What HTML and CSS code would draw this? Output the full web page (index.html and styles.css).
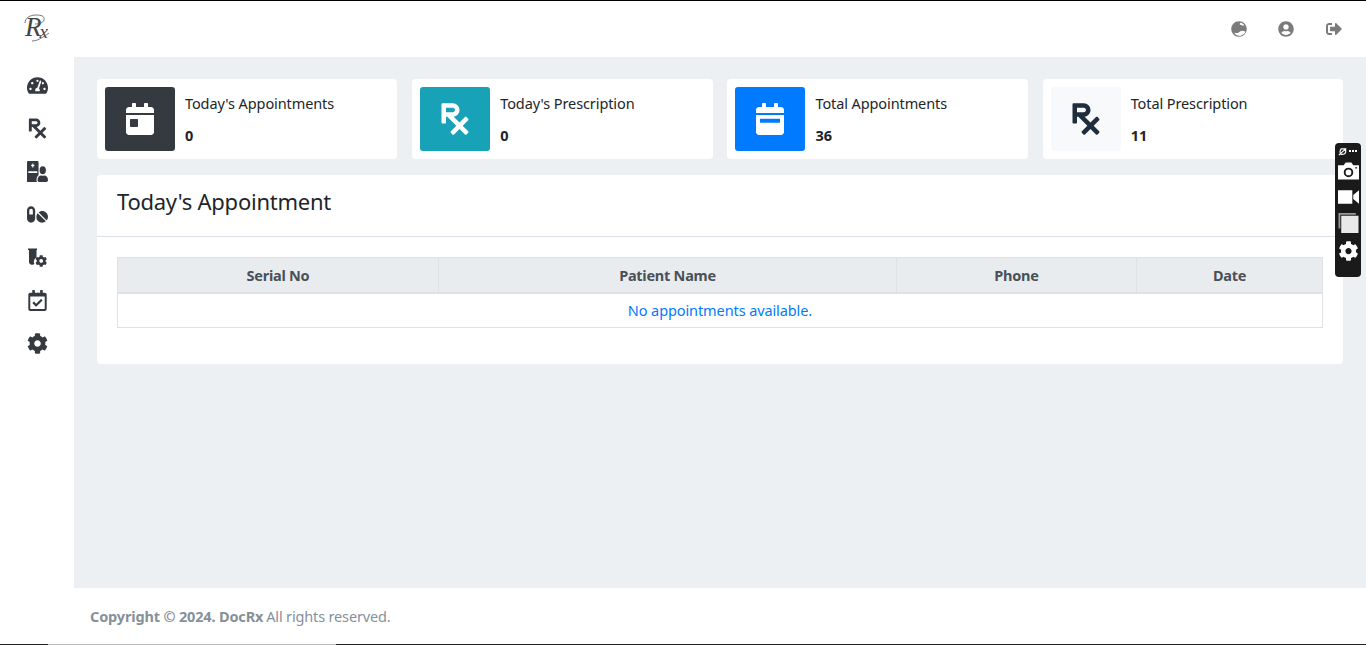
FILE: index.html
```html
<!DOCTYPE html>
<html lang="en">
<head>
<meta charset="utf-8">
<title>DocRx</title>
<link rel="stylesheet" href="styles.css">
</head>
<body>
<svg class="sprite" width="0" height="0">
  <symbol id="i-rx" viewBox="0 0 384 512"><path d="M301.26 352l78.06-78.06c6.25-6.25 6.25-16.38 0-22.63l-22.63-22.63c-6.25-6.25-16.38-6.25-22.63 0L256 306.74l-83.96-83.96C219.31 216.8 256 176.89 256 128c0-53.02-42.98-96-96-96H16C7.16 32 0 39.16 0 48v256c0 8.84 7.16 16 16 16h32c8.84 0 16-7.16 16-16v-80h18.75l128 128-78.06 78.06c-6.25 6.25-6.25 16.38 0 22.63l22.63 22.63c6.25 6.25 16.38 6.25 22.63 0L256 397.25l78.06 78.06c6.25 6.25 16.38 6.25 22.63 0l22.63-22.63c6.25-6.25 6.25-16.38 0-22.63L301.26 352zM64 96h96c17.64 0 32 14.36 32 32s-14.36 32-32 32H64V96z"/></symbol>
  <symbol id="i-cog" viewBox="0 0 512 512"><path d="M487.4 315.7l-42.6-24.6c4.3-23.2 4.3-47 0-70.2l42.6-24.6c4.9-2.8 7.1-8.6 5.5-14-11.1-35.6-30-67.8-54.7-94.6-3.8-4.1-10-5.1-14.8-2.3L380.8 110c-17.9-15.4-38.5-27.3-60.8-35.1V25.8c0-5.6-3.9-10.5-9.4-11.7-36.7-8.2-74.3-7.8-109.2 0-5.5 1.2-9.4 6.1-9.4 11.7V75c-22.2 7.9-42.8 19.8-60.8 35.1L88.7 85.5c-4.9-2.8-11-1.9-14.8 2.3-24.7 26.7-43.6 58.9-54.7 94.6-1.7 5.4.6 11.2 5.5 14L67.3 221c-4.3 23.2-4.3 47 0 70.2l-42.6 24.6c-4.9 2.8-7.1 8.6-5.5 14 11.1 35.6 30 67.8 54.7 94.6 3.8 4.1 10 5.1 14.8 2.3l42.6-24.6c17.9 15.4 38.5 27.3 60.8 35.1v49.2c0 5.6 3.9 10.5 9.4 11.7 36.7 8.2 74.3 7.8 109.2 0 5.5-1.2 9.4-6.1 9.4-11.7v-49.2c22.2-7.9 42.8-19.8 60.8-35.1l42.6 24.6c4.9 2.8 11 1.9 14.8-2.3 24.7-26.7 43.6-58.9 54.7-94.6 1.5-5.5-.7-11.3-5.6-14.1zM256 336c-44.1 0-80-35.9-80-80s35.9-80 80-80 80 35.9 80 80-35.9 80-80 80z"/></symbol>
</svg>

<div class="app">
  <header class="topbar">
    <svg class="logo" viewBox="0 0 27 28">
      <text class="logo-text" x="1" y="22"><tspan class="logo-r">R</tspan><tspan class="logo-x" dx="-2" dy="2">x</tspan></text>
      <path class="logo-swash" d="M1 9C1 4 6 1 12 1c5 0 9 1 8 5-1 3-5 4-9 4M8 27c5 0 10-3 17-8"/>
    </svg>
    <nav class="top-actions">
      <svg class="top-icon" viewBox="0 0 496 512"><path fill-rule="evenodd" d="M248 8C111 8 0 119 0 256s111 248 248 248 248-111 248-248S385 8 248 8zM90 370c50 20 110 30 160-10 30-25 50-50 100-50 40 0 70 10 105 30l-25 50c-30 30-70 60-110 70-50 15-110 10-150-10-30-15-60-50-80-80zM300 55c40 10 80 30 110 70l-30 35-50-30-50-10-10-30z"/></svg>
      <svg class="top-icon" viewBox="0 0 496 512"><path d="M248 8C111 8 0 119 0 256s111 248 248 248 248-111 248-248S385 8 248 8zm0 96c48.6 0 88 39.4 88 88s-39.4 88-88 88-88-39.4-88-88 39.4-88 88-88zm0 344c-58.7 0-111.3-26.6-146.5-68.2 18.8-35.4 55.6-59.8 98.5-59.8 2.4 0 4.8.4 7.1 1.1 13 4.2 26.6 6.9 40.9 6.9 14.3 0 28-2.7 40.9-6.9 2.3-.7 4.7-1.1 7.1-1.1 42.9 0 79.7 24.4 98.5 59.8C359.3 421.4 306.7 448 248 448z"/></svg>
      <svg class="top-icon top-last" viewBox="0 0 512 512"><path d="M497 273L329 441c-15 15-41 4.5-41-17v-96H152c-13.3 0-24-10.7-24-24v-96c0-13.3 10.7-24 24-24h136V88c0-21.4 25.9-32 41-17l168 168c9.3 9.4 9.3 24.6 0 34zM192 436v-40c0-6.6-5.4-12-12-12H96c-17.7 0-32-14.3-32-32V160c0-17.7 14.3-32 32-32h84c6.6 0 12-5.4 12-12V76c0-6.6-5.4-12-12-12H96c-53 0-96 43-96 96v192c0 53 43 96 96 96h84c6.6 0 12-5.4 12-12z"/></svg>
    </nav>
  </header>

  <div class="middle">
    <aside class="sidebar">
      <svg class="nav-icon" viewBox="0 0 576 512"><path d="M288 32C128.94 32 0 160.94 0 320c0 52.8 14.25 102.26 39.06 144.8 5.61 9.62 16.3 15.2 27.44 15.2h443c11.14 0 21.83-5.58 27.44-15.2C561.75 422.26 576 372.8 576 320c0-159.06-128.94-288-288-288zm0 64c14.71 0 26.58 10.13 30.32 23.65-1.11 2.26-2.64 4.23-3.45 6.67l-9.22 27.67c-5.13 3.49-10.97 6.01-17.64 6.01-17.67 0-32-14.33-32-32S270.33 96 288 96zM96 384c-17.67 0-32-14.33-32-32s14.33-32 32-32 32 14.33 32 32-14.33 32-32 32zm48-160c-17.67 0-32-14.33-32-32s14.33-32 32-32 32 14.33 32 32-14.33 32-32 32zm246.77-72.41l-61.33 184C343.13 347.33 352 364.54 352 384c0 11.72-3.38 22.55-8.88 32H232.88c-5.5-9.45-8.88-20.28-8.88-32 0-33.94 26.5-61.43 59.9-63.59l61.34-184.01c4.17-12.56 17.73-19.45 30.36-15.17 12.57 4.19 19.35 17.79 15.17 30.36zm14.66 57.2l15.52-46.55c3.47-1.29 7.13-2.23 11.05-2.23 17.67 0 32 14.33 32 32s-14.33 32-32 32c-11.38-.01-20.89-6.28-26.57-15.22zM480 384c-17.67 0-32-14.33-32-32s14.33-32 32-32 32 14.33 32 32-14.33 32-32 32z"/></svg>
      <svg class="nav-icon nav-rx"><use href="#i-rx"/></svg>
      <svg class="nav-icon" viewBox="0 0 640 512" preserveAspectRatio="none"><path fill-rule="evenodd" d="M480 320a96 96 0 1 0-96-96 96 96 0 0 0 96 96zm48 32a22.88 22.88 0 0 0-7.06 1.09 124.76 124.76 0 0 1-81.89 0A22.88 22.88 0 0 0 432 352a112 112 0 0 0-112 112.62c.14 26.26 21.73 47.38 48 47.38h224c26.27 0 47.86-21.12 48-47.38A112 112 0 0 0 528 352zm-198.09 10.45A145.19 145.19 0 0 1 352 344.62V32a32 32 0 0 0-32-32H32A32 32 0 0 0 0 32v464a16 16 0 0 0 16 16h288.31A78.62 78.62 0 0 1 288 464.79a143.06 143.06 0 0 1 41.91-102.34zM40 250h272v40H40zM192 154a6 6 0 0 1-6 6h-20a6 6 0 0 1-6-6v-26h-26a6 6 0 0 1-6-6V98a6 6 0 0 1 6-6h26V66a6 6 0 0 1 6-6h20a6 6 0 0 1 6 6v26h26a6 6 0 0 1 6 6v24a6 6 0 0 1-6 6h-26z"/></svg>
      <svg class="nav-icon" viewBox="0 0 576 512"><path d="M112 32C50.1 32 0 82.1 0 144v224c0 61.9 50.1 112 112 112s112-50.1 112-112V144c0-61.9-50.1-112-112-112zm48 224H64V144c0-26.5 21.5-48 48-48s48 21.5 48 48v112zm139.7-29.7c-3.5-3.5-9.4-3.1-12.3.8-45.3 62.5-40.4 150.1 15.9 206.4 56.3 56.3 143.9 61.2 206.4 15.9 4-2.9 4.3-8.8.8-12.3L299.7 226.3zm229.8-19c-56.3-56.3-143.9-61.2-206.4-15.9-4 2.9-4.3 8.8-.8 12.3l210.8 210.8c3.5 3.500 9.4 3.100 12.3-.8 45.3-62.6 40.5-150.1-15.9-206.4z"/></svg>
      <svg class="nav-icon" viewBox="0 0 21 21"><path d="M1 1.500h9v1.500H9.500v7.500a5 5 0 0 0-2 6.500A3.500 3.500 0 0 1 2 15.500V3H1z"/><g transform="translate(8.200 8) scale(.0234)"><use href="#i-cog" width="512" height="512"/></g></svg>
      <svg class="nav-icon" viewBox="0 0 448 512"><path d="M400 64h-48V12c0-6.6-5.4-12-12-12h-40c-6.600 0-12 5.400-12 12v52H160V12c0-6.600-5.400-12-12-12h-40c-6.600 0-12 5.400-12 12v52H48C21.500 64 0 85.500 0 112v352c0 26.500 21.500 48 48 48h352c26.500 0 48-21.500 48-48V112c0-26.500-21.500-48-48-48zm-6 400H54a6 6 0 0 1-6-6V160h352v298a6 6 0 0 1-6 6zm-52.849-200.650L198.842 404.519c-4.705 4.667-12.303 4.637-16.971-.068l-75.091-75.699c-4.667-4.705-4.637-12.303.068-16.971l22.719-22.536c4.705-4.667 12.303-4.637 16.970.069l44.104 44.461 111.072-110.181c4.705-4.667 12.303-4.637 16.971.068l22.536 22.718c4.667 4.705 4.636 12.303-.069 16.970z"/></svg>
      <svg class="nav-icon"><use href="#i-cog"/></svg>
    </aside>

    <main class="content">
      <section class="stats">
        <div class="stat">
          <div class="stat-box box-dark"><svg class="stat-svg" viewBox="0 0 448 512"><path d="M0 464c0 26.500 21.500 48 48 48h352c26.500 0 48-21.500 48-48V192H0v272zm64-192c0-8.800 7.200-16 16-16h96c8.800 0 16 7.200 16 16v96c0 8.800-7.200 16-16 16H80c-8.800 0-16-7.200-16-16v-96zM400 64h-48V16c0-8.800-7.200-16-16-16h-32c-8.800 0-16 7.200-16 16v48H160V16c0-8.800-7.200-16-16-16h-32c-8.800 0-16 7.200-16 16v48H48C21.500 64 0 85.500 0 112v48h448v-48c0-26.500-21.500-48-48-48z"/></svg></div>
          <div class="stat-text"><span class="stat-label">Today's Appointments</span><span class="stat-value">0</span></div>
        </div>
        <div class="stat">
          <div class="stat-box box-teal"><svg class="stat-svg stat-rx"><use href="#i-rx"/></svg></div>
          <div class="stat-text"><span class="stat-label">Today's Prescription</span><span class="stat-value">0</span></div>
        </div>
        <div class="stat">
          <div class="stat-box box-blue"><svg class="stat-svg" viewBox="0 0 448 512"><path fill-rule="evenodd" d="M0 464c0 26.500 21.500 48 48 48h352c26.500 0 48-21.500 48-48V192H0v272zM64 250h320v64H64zM400 64h-48V16c0-8.800-7.200-16-16-16h-32c-8.800 0-16 7.200-16 16v48H160V16c0-8.800-7.200-16-16-16h-32c-8.800 0-16 7.200-16 16v48H48C21.500 64 0 85.500 0 112v48h448v-48c0-26.500-21.500-48-48-48z"/></svg></div>
          <div class="stat-text"><span class="stat-label">Total Appointments</span><span class="stat-value">36</span></div>
        </div>
        <div class="stat">
          <div class="stat-box box-light"><svg class="stat-svg stat-rx"><use href="#i-rx"/></svg></div>
          <div class="stat-text"><span class="stat-label">Total Prescription</span><span class="stat-value">11</span></div>
        </div>
      </section>

      <section class="card">
        <div class="card-head"><h1 class="card-title">Today's Appointment</h1></div>
        <div class="card-body">
          <table class="table">
            <colgroup><col class="c1"><col class="c2"><col class="c3"><col class="c4"></colgroup>
            <thead><tr><th>Serial No</th><th>Patient Name</th><th>Phone</th><th>Date</th></tr></thead>
            <tbody><tr><td colspan="4" class="empty">No appointments available.</td></tr></tbody>
          </table>
        </div>
      </section>
    </main>
  </div>

  <footer class="footer"><strong>Copyright © 2024. DocRx</strong> All rights reserved.</footer>
</div>

<div class="dock">
  <div class="dock-top">
    <svg class="dock-link" viewBox="0 0 10 10"><path d="M1 9 9 1.500M3.500 2h5v3.500C8.500 7.500 6 8.500 3 8 2 6 2 4 3.500 2z" fill="none" stroke="#fff" stroke-width="1.300"/></svg>
    <span class="dock-dots"><i></i><i></i><i></i></span>
  </div>
  <svg class="dock-icon" viewBox="0 0 22 18"><path fill-rule="evenodd" d="M0 3h6l2-3h6l2 3h6v15H0zM11 5.500a5 5 0 1 0 0 10 5 5 0 0 0 0-10zM11 7.500a3 3 0 1 1 0 6 3 3 0 0 1 0-6zM18 5h2v1.500h-2z"/></svg>
  <svg class="dock-icon" viewBox="0 0 22 18"><path d="M0 2h15v14H0zM16 7l6-5v14l-6-5z"/></svg>
  <svg class="dock-icon" viewBox="0 0 22 22"><path class="dock-back" d="M0 0h19v2H2v15H0z"/><path class="dock-front" d="M3 3h19v19H3z"/></svg>
  <svg class="dock-icon dock-cog"><use href="#i-cog"/></svg>
</div>

<div class="edge-bottom"><span class="seg-grey"></span></div>
</body>
</html>
```

FILE: styles.css
```css
* { box-sizing: border-box; }
html, body { margin: 0; height: 100%; }
body {
  font-family: "Noto Sans", "Open Sans", sans-serif;
  font-size: 14.5px;
  color: #212529;
  background: #fff;
  overflow: hidden;
  position: relative;
}
.sprite { position: absolute; }
.app { display: flex; flex-direction: column; height: 645px; border-top: 1px solid #000; }
.topbar { display: flex; align-items: center; justify-content: space-between; height: 56px; flex: none; padding: 0 24px; }
.logo { width: 27px; height: 28px; margin-top: -3px; overflow: visible; }
.logo-text { font-family: "Liberation Serif", serif; font-style: italic; fill: #444; }
.logo-r { font-size: 27px; }
.logo-x { font-size: 19px; }
.logo-swash { fill: none; stroke: #555; stroke-width: .8; }
.top-actions { display: flex; gap: 31px; align-items: center; }
.top-icon { width: 16px; height: 16px; fill: #7b7b7b; }
.top-icon:first-child { margin-left: -1px; }
.top-last { margin-left: 1px; }
.middle { flex: 1; display: flex; min-height: 0; }
.sidebar { width: 74px; flex: none; display: flex; flex-direction: column; align-items: center; padding-top: 18px; gap: 22px; }
.nav-icon { width: 21px; height: 21px; fill: #343a40; flex: none; }
.nav-rx { width: 23px; height: 23px; margin: -1px 0; }
.content { flex: 1; background: #ecf0f3; padding: 22px 23px; display: flex; flex-direction: column; gap: 16px; }
.stats { display: grid; grid-template-columns: repeat(4, 1fr); gap: 14.9px; }
.stat { background: #fff; border-radius: 4px; height: 80px; padding: 8px; display: flex; gap: 10px; }
.stat-box { width: 70px; height: 64px; border-radius: 3px; display: flex; align-items: center; justify-content: center; flex: none; }
.stat-svg { width: 30px; height: 32px; fill: currentColor; }
.stat-rx { width: 36px; height: 36px; }
.box-dark { background: #343a40; color: #fff; }
.box-teal { background: #17a2b8; color: #fff; }
.box-blue { background: #007bff; color: #fff; }
.box-light { background: #f8f9fa; color: #1f2d3d; }
.stat-text { display: flex; flex-direction: column; padding-top: 5px; }
.stat-label { line-height: 22px; letter-spacing: -.1px; }
.stat-value { font-weight: 700; line-height: 22px; margin-top: 10px; }
.card { background: #fff; border-radius: 4px; }
.card-head { height: 62px; padding: 0 20px 10px; display: flex; align-items: center; border-bottom: 1px solid #dee2e6; }
.card-title { font-size: 22px; font-weight: 400; margin: 0; letter-spacing: -.25px; }
.card-body { padding: 20px; }
.table { width: 100%; border-collapse: collapse; table-layout: fixed; margin-bottom: 16px; }
.c1 { width: 321px; } .c2 { width: 458px; } .c3 { width: 240px; }
.table th { background: #e9ecef; color: #495057; border: 1px solid #dee2e6; border-bottom-width: 2px; height: 35px; padding: 0; font-weight: 700; letter-spacing: -.25px; }
.empty { border: 1px solid #dee2e6; height: 35px; padding: 0; text-align: center; color: #007bff; letter-spacing: -.1px; }
.footer { height: 57px; flex: none; display: flex; align-items: center; gap: 3px; padding-left: 90px; padding-bottom: 2px; color: #869099; letter-spacing: -.16px; }
.footer strong { font-weight: 700; }
.dock { position: absolute; left: 1335px; top: 143px; width: 26px; height: 134px; background: #1a1a1a; border-radius: 4px; display: flex; flex-direction: column; align-items: center; padding-top: 4px; gap: 6px; }
.dock-top { display: flex; width: 100%; height: 8px; padding: 0 3px; gap: 2px; align-items: center; }
.dock-link { width: 9px; height: 9px; }
.dock-dots { display: flex; gap: 1px; }
.dock-dots i { width: 2px; height: 2px; background: #fff; }
.dock-icon { width: 21px; height: 20px; fill: #fff; flex: none; }
.dock-back { fill: #9a9a9a; }
.dock-front { fill: #e8e8e8; }
.dock-cog { margin-top: 2px; }
.edge-bottom { position: absolute; left: 0; right: 0; top: 644px; height: 1px; background: #222; }
.seg-grey { position: absolute; left: 48px; width: 288px; height: 1px; background: #bbb; }
```
